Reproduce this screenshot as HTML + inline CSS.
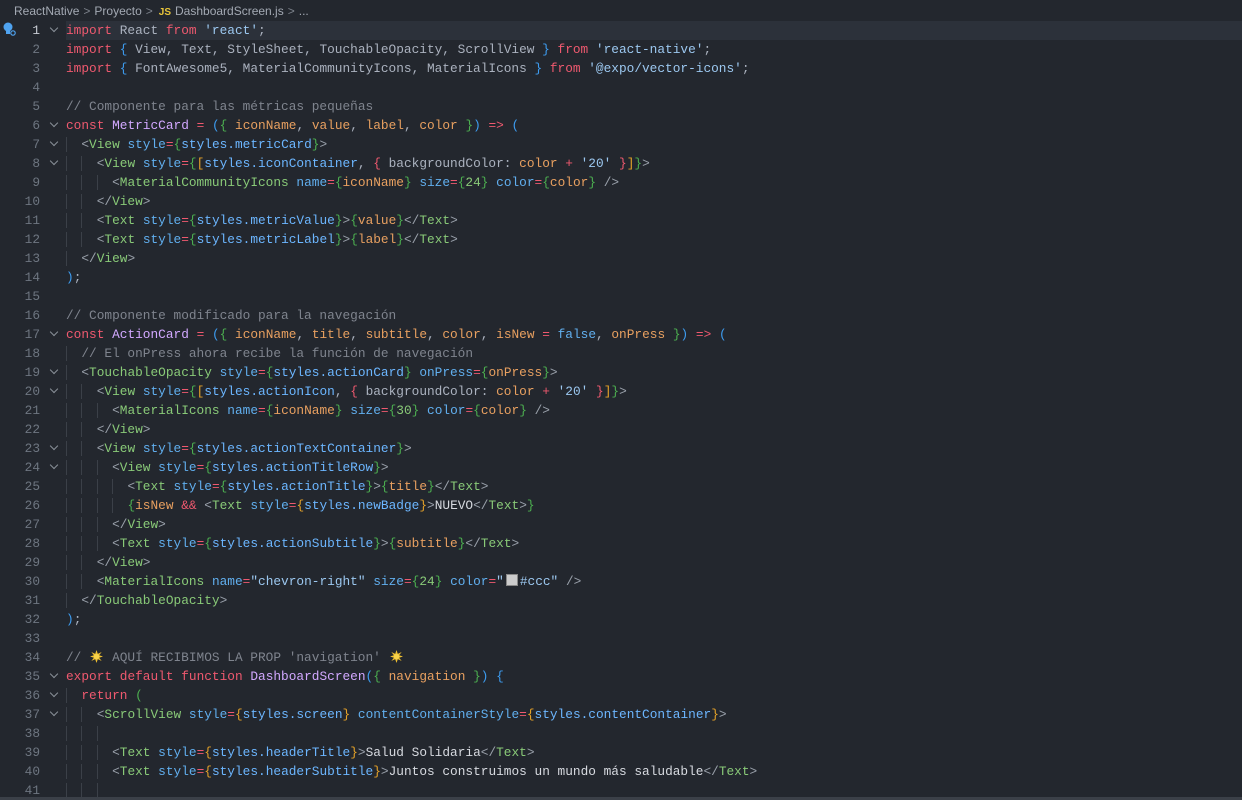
<!DOCTYPE html>
<html><head><meta charset="utf-8"><style>
html,body{margin:0;padding:0;background:#23272e;width:1242px;height:800px;overflow:hidden}
.bc{position:absolute;left:14px;top:2px;height:18px;font:12px "Liberation Sans",sans-serif;color:#a3a9b3;line-height:18px;white-space:nowrap}
.bc .js{color:#e8c53a;font-weight:bold;font-size:10px;margin:0 4px 0 2px}
.bc .sep{color:#7d838c;margin:0 4px}
.code{position:absolute;left:0;top:21px;width:1242px;font:12.8px "Liberation Mono",monospace;line-height:19px;white-space:normal}
.ln{display:block;height:19px;position:relative;overflow:hidden}
.num{position:absolute;left:0;width:40px;text-align:right;color:#6e7681}
.cur .num{color:#c8ccd4}
.fold{position:absolute;left:49px;top:6px;width:10px;height:7px;font-size:0}
.fold::before{content:"";position:absolute;left:2px;top:-2px;width:5px;height:5px;border-right:1px solid #8a9099;border-bottom:1px solid #8a9099;transform:rotate(45deg)}
.tx{position:absolute;left:66px;top:0;color:#abb2bf;white-space:pre}
.cur .tx{right:0;background:#2c313a}
.g{box-shadow:inset 1px 0 0 #3b4048}
.k{color:#ef596f}.i{color:#abb2bf}.s{color:#9cc8f0}.c{color:#7f848e}.f{color:#d2a8ff}.p{color:#e8a060}
.t{color:#89ca78}.a{color:#61afef}.o{color:#ef596f}.u{color:#9aa1ab}.B{color:#3d9cf0}.G{color:#4caf50}.Y{color:#e5a228}.R{color:#ef596f}
.n{color:#89ca78}.st{color:#6cb6ff}.w{color:#d7dae0}.v{color:#e8a060}
.em{display:inline-block;width:2ch;text-align:center;vertical-align:-2px}
</style></head><body>
<div class="bc">ReactNative<span class="sep">&gt;</span>Proyecto<span class="sep">&gt;</span><span class="js">JS</span>DashboardScreen.js<span class="sep">&gt;</span>...</div>
<svg style="position:absolute;left:2px;top:22px" width="14" height="14" viewBox="0 0 14 14"><circle cx="6" cy="5" r="4.5" fill="#4fa3f0"/><rect x="4" y="9" width="4" height="3" fill="#4fa3f0"/><circle cx="11" cy="11" r="3" fill="#23272e"/><circle cx="11" cy="11" r="2.2" fill="none" stroke="#4fa3f0" stroke-width="1.2"/></svg>
<div class="code">
<div class="ln cur"><span class="num">1</span><span class="fold"></span><span class="tx"><span class="k">import</span> React <span class="k">from</span> <span class="s">'react'</span>;</span></div>
<div class="ln"><span class="num">2</span><span class="tx"><span class="k">import</span> <span class="B">{</span> View, Text, StyleSheet, TouchableOpacity, ScrollView <span class="B">}</span> <span class="k">from</span> <span class="s">'react-native'</span>;</span></div>
<div class="ln"><span class="num">3</span><span class="tx"><span class="k">import</span> <span class="B">{</span> FontAwesome5, MaterialCommunityIcons, MaterialIcons <span class="B">}</span> <span class="k">from</span> <span class="s">'@expo/vector-icons'</span>;</span></div>
<div class="ln"><span class="num">4</span><span class="tx"></span></div>
<div class="ln"><span class="num">5</span><span class="tx c">// Componente para las métricas pequeñas</span></div>
<div class="ln"><span class="num">6</span><span class="fold"></span><span class="tx"><span class="k">const</span> <span class="f">MetricCard</span> <span class="o">=</span> <span class="B">(</span><span class="G">{</span> <span class="p">iconName</span>, <span class="p">value</span>, <span class="p">label</span>, <span class="p">color</span> <span class="G">}</span><span class="B">)</span> <span class="o">=&gt;</span> <span class="B">(</span></span></div>
<div class="ln"><span class="num">7</span><span class="fold"></span><span class="tx"><span class="g">  </span><span class="u">&lt;</span><span class="t">View</span> <span class="a">style</span><span class="o">=</span><span class="G">{</span><span class="st">styles.metricCard</span><span class="G">}</span><span class="u">&gt;</span></span></div>
<div class="ln"><span class="num">8</span><span class="fold"></span><span class="tx"><span class="g">  </span><span class="g">  </span><span class="u">&lt;</span><span class="t">View</span> <span class="a">style</span><span class="o">=</span><span class="G">{</span><span class="Y">[</span><span class="st">styles.iconContainer</span>, <span class="R">{</span> backgroundColor: <span class="v">color</span> <span class="o">+</span> <span class="s">'20'</span> <span class="R">}</span><span class="Y">]</span><span class="G">}</span><span class="u">&gt;</span></span></div>
<div class="ln"><span class="num">9</span><span class="tx"><span class="g">  </span><span class="g">  </span><span class="g">  </span><span class="u">&lt;</span><span class="t">MaterialCommunityIcons</span> <span class="a">name</span><span class="o">=</span><span class="G">{</span><span class="v">iconName</span><span class="G">}</span> <span class="a">size</span><span class="o">=</span><span class="G">{</span><span class="n">24</span><span class="G">}</span> <span class="a">color</span><span class="o">=</span><span class="G">{</span><span class="v">color</span><span class="G">}</span> <span class="u">/&gt;</span></span></div>
<div class="ln"><span class="num">10</span><span class="tx"><span class="g">  </span><span class="g">  </span><span class="u">&lt;/</span><span class="t">View</span><span class="u">&gt;</span></span></div>
<div class="ln"><span class="num">11</span><span class="tx"><span class="g">  </span><span class="g">  </span><span class="u">&lt;</span><span class="t">Text</span> <span class="a">style</span><span class="o">=</span><span class="G">{</span><span class="st">styles.metricValue</span><span class="G">}</span><span class="u">&gt;</span><span class="G">{</span><span class="v">value</span><span class="G">}</span><span class="u">&lt;/</span><span class="t">Text</span><span class="u">&gt;</span></span></div>
<div class="ln"><span class="num">12</span><span class="tx"><span class="g">  </span><span class="g">  </span><span class="u">&lt;</span><span class="t">Text</span> <span class="a">style</span><span class="o">=</span><span class="G">{</span><span class="st">styles.metricLabel</span><span class="G">}</span><span class="u">&gt;</span><span class="G">{</span><span class="v">label</span><span class="G">}</span><span class="u">&lt;/</span><span class="t">Text</span><span class="u">&gt;</span></span></div>
<div class="ln"><span class="num">13</span><span class="tx"><span class="g">  </span><span class="u">&lt;/</span><span class="t">View</span><span class="u">&gt;</span></span></div>
<div class="ln"><span class="num">14</span><span class="tx"><span class="B">)</span>;</span></div>
<div class="ln"><span class="num">15</span><span class="tx"></span></div>
<div class="ln"><span class="num">16</span><span class="tx c">// Componente modificado para la navegación</span></div>
<div class="ln"><span class="num">17</span><span class="fold"></span><span class="tx"><span class="k">const</span> <span class="f">ActionCard</span> <span class="o">=</span> <span class="B">(</span><span class="G">{</span> <span class="p">iconName</span>, <span class="p">title</span>, <span class="p">subtitle</span>, <span class="p">color</span>, <span class="p">isNew</span> <span class="o">=</span> <span class="a">false</span>, <span class="p">onPress</span> <span class="G">}</span><span class="B">)</span> <span class="o">=&gt;</span> <span class="B">(</span></span></div>
<div class="ln"><span class="num">18</span><span class="tx"><span class="g">  </span><span class="c">// El onPress ahora recibe la función de navegación</span></span></div>
<div class="ln"><span class="num">19</span><span class="fold"></span><span class="tx"><span class="g">  </span><span class="u">&lt;</span><span class="t">TouchableOpacity</span> <span class="a">style</span><span class="o">=</span><span class="G">{</span><span class="st">styles.actionCard</span><span class="G">}</span> <span class="a">onPress</span><span class="o">=</span><span class="G">{</span><span class="v">onPress</span><span class="G">}</span><span class="u">&gt;</span></span></div>
<div class="ln"><span class="num">20</span><span class="fold"></span><span class="tx"><span class="g">  </span><span class="g">  </span><span class="u">&lt;</span><span class="t">View</span> <span class="a">style</span><span class="o">=</span><span class="G">{</span><span class="Y">[</span><span class="st">styles.actionIcon</span>, <span class="R">{</span> backgroundColor: <span class="v">color</span> <span class="o">+</span> <span class="s">'20'</span> <span class="R">}</span><span class="Y">]</span><span class="G">}</span><span class="u">&gt;</span></span></div>
<div class="ln"><span class="num">21</span><span class="tx"><span class="g">  </span><span class="g">  </span><span class="g">  </span><span class="u">&lt;</span><span class="t">MaterialIcons</span> <span class="a">name</span><span class="o">=</span><span class="G">{</span><span class="v">iconName</span><span class="G">}</span> <span class="a">size</span><span class="o">=</span><span class="G">{</span><span class="n">30</span><span class="G">}</span> <span class="a">color</span><span class="o">=</span><span class="G">{</span><span class="v">color</span><span class="G">}</span> <span class="u">/&gt;</span></span></div>
<div class="ln"><span class="num">22</span><span class="tx"><span class="g">  </span><span class="g">  </span><span class="u">&lt;/</span><span class="t">View</span><span class="u">&gt;</span></span></div>
<div class="ln"><span class="num">23</span><span class="fold"></span><span class="tx"><span class="g">  </span><span class="g">  </span><span class="u">&lt;</span><span class="t">View</span> <span class="a">style</span><span class="o">=</span><span class="G">{</span><span class="st">styles.actionTextContainer</span><span class="G">}</span><span class="u">&gt;</span></span></div>
<div class="ln"><span class="num">24</span><span class="fold"></span><span class="tx"><span class="g">  </span><span class="g">  </span><span class="g">  </span><span class="u">&lt;</span><span class="t">View</span> <span class="a">style</span><span class="o">=</span><span class="G">{</span><span class="st">styles.actionTitleRow</span><span class="G">}</span><span class="u">&gt;</span></span></div>
<div class="ln"><span class="num">25</span><span class="tx"><span class="g">  </span><span class="g">  </span><span class="g">  </span><span class="g">  </span><span class="u">&lt;</span><span class="t">Text</span> <span class="a">style</span><span class="o">=</span><span class="G">{</span><span class="st">styles.actionTitle</span><span class="G">}</span><span class="u">&gt;</span><span class="G">{</span><span class="v">title</span><span class="G">}</span><span class="u">&lt;/</span><span class="t">Text</span><span class="u">&gt;</span></span></div>
<div class="ln"><span class="num">26</span><span class="tx"><span class="g">  </span><span class="g">  </span><span class="g">  </span><span class="g">  </span><span class="G">{</span><span class="v">isNew</span> <span class="o">&amp;&amp;</span> <span class="u">&lt;</span><span class="t">Text</span> <span class="a">style</span><span class="o">=</span><span class="Y">{</span><span class="st">styles.newBadge</span><span class="Y">}</span><span class="u">&gt;</span><span class="w">NUEVO</span><span class="u">&lt;/</span><span class="t">Text</span><span class="u">&gt;</span><span class="G">}</span></span></div>
<div class="ln"><span class="num">27</span><span class="tx"><span class="g">  </span><span class="g">  </span><span class="g">  </span><span class="u">&lt;/</span><span class="t">View</span><span class="u">&gt;</span></span></div>
<div class="ln"><span class="num">28</span><span class="tx"><span class="g">  </span><span class="g">  </span><span class="g">  </span><span class="u">&lt;</span><span class="t">Text</span> <span class="a">style</span><span class="o">=</span><span class="G">{</span><span class="st">styles.actionSubtitle</span><span class="G">}</span><span class="u">&gt;</span><span class="G">{</span><span class="v">subtitle</span><span class="G">}</span><span class="u">&lt;/</span><span class="t">Text</span><span class="u">&gt;</span></span></div>
<div class="ln"><span class="num">29</span><span class="tx"><span class="g">  </span><span class="g">  </span><span class="u">&lt;/</span><span class="t">View</span><span class="u">&gt;</span></span></div>
<div class="ln"><span class="num">30</span><span class="tx"><span class="g">  </span><span class="g">  </span><span class="u">&lt;</span><span class="t">MaterialIcons</span> <span class="a">name</span><span class="o">=</span><span class="s">"chevron-right"</span> <span class="a">size</span><span class="o">=</span><span class="G">{</span><span class="n">24</span><span class="G">}</span> <span class="a">color</span><span class="o">=</span><span class="s">"<span style="display:inline-block;width:10px;height:10px;background:#ccc;border:1px solid #888;margin:0 2px;vertical-align:-1px"></span>#ccc"</span> <span class="u">/&gt;</span></span></div>
<div class="ln"><span class="num">31</span><span class="tx"><span class="g">  </span><span class="u">&lt;/</span><span class="t">TouchableOpacity</span><span class="u">&gt;</span></span></div>
<div class="ln"><span class="num">32</span><span class="tx"><span class="B">)</span>;</span></div>
<div class="ln"><span class="num">33</span><span class="tx"></span></div>
<div class="ln"><span class="num">34</span><span class="tx c">// <span class="em"><svg width="13" height="13" viewBox="0 0 20 20"><polygon points="10,0 12,6 18,3 14,8 20,10 14,12 18,17 12,14 10,20 8,14 2,17 6,12 0,10 6,8 2,3 8,6" fill="#f2c230"/><circle cx="10" cy="10" r="4" fill="#f7d24a"/></svg></span> AQUÍ RECIBIMOS LA PROP 'navigation' <span class="em"><svg width="13" height="13" viewBox="0 0 20 20"><polygon points="10,0 12,6 18,3 14,8 20,10 14,12 18,17 12,14 10,20 8,14 2,17 6,12 0,10 6,8 2,3 8,6" fill="#f2c230"/><circle cx="10" cy="10" r="4" fill="#f7d24a"/></svg></span></span></div>
<div class="ln"><span class="num">35</span><span class="fold"></span><span class="tx"><span class="k">export</span> <span class="k">default</span> <span class="k">function</span> <span class="f">DashboardScreen</span><span class="B">(</span><span class="G">{</span> <span class="p">navigation</span> <span class="G">}</span><span class="B">)</span> <span class="B">{</span></span></div>
<div class="ln"><span class="num">36</span><span class="fold"></span><span class="tx"><span class="g">  </span><span class="k">return</span> <span class="G">(</span></span></div>
<div class="ln"><span class="num">37</span><span class="fold"></span><span class="tx"><span class="g">  </span><span class="g">  </span><span class="u">&lt;</span><span class="t">ScrollView</span> <span class="a">style</span><span class="o">=</span><span class="Y">{</span><span class="st">styles.screen</span><span class="Y">}</span> <span class="a">contentContainerStyle</span><span class="o">=</span><span class="Y">{</span><span class="st">styles.contentContainer</span><span class="Y">}</span><span class="u">&gt;</span></span></div>
<div class="ln"><span class="num">38</span><span class="tx"><span class="g">  </span><span class="g">  </span><span class="g">  </span></span></div>
<div class="ln"><span class="num">39</span><span class="tx"><span class="g">  </span><span class="g">  </span><span class="g">  </span><span class="u">&lt;</span><span class="t">Text</span> <span class="a">style</span><span class="o">=</span><span class="Y">{</span><span class="st">styles.headerTitle</span><span class="Y">}</span><span class="u">&gt;</span><span class="w">Salud Solidaria</span><span class="u">&lt;/</span><span class="t">Text</span><span class="u">&gt;</span></span></div>
<div class="ln"><span class="num">40</span><span class="tx"><span class="g">  </span><span class="g">  </span><span class="g">  </span><span class="u">&lt;</span><span class="t">Text</span> <span class="a">style</span><span class="o">=</span><span class="Y">{</span><span class="st">styles.headerSubtitle</span><span class="Y">}</span><span class="u">&gt;</span><span class="w">Juntos construimos un mundo más saludable</span><span class="u">&lt;/</span><span class="t">Text</span><span class="u">&gt;</span></span></div>
<div class="ln"><span class="num">41</span><span class="tx"><span class="g">  </span><span class="g">  </span><span class="g">  </span></span></div>
</div>
<div style="position:absolute;left:0;top:797px;width:1242px;height:3px;background:#3b4048"></div>
</body></html>
